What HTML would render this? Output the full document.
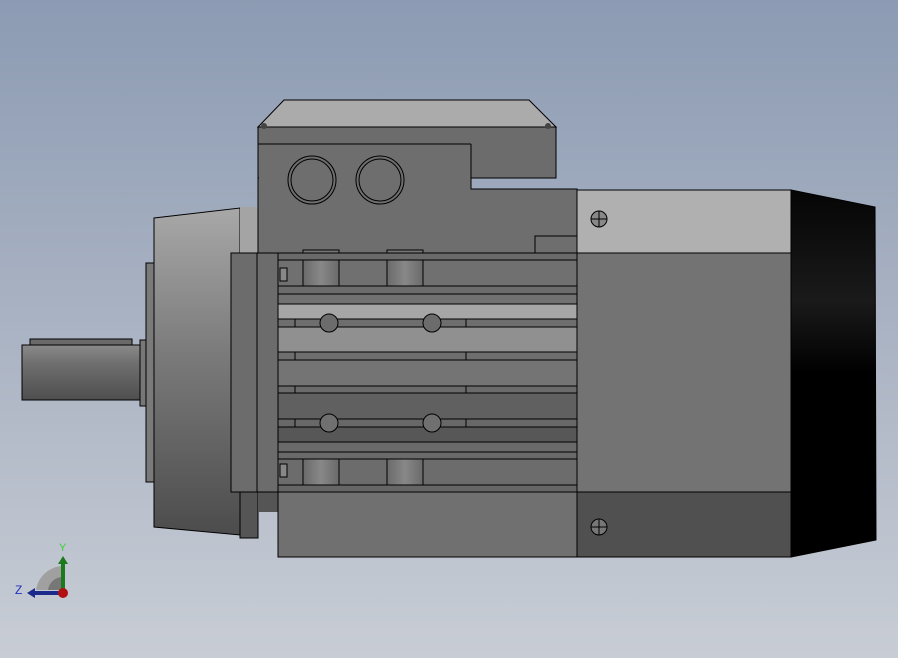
<!DOCTYPE html>
<html><head><meta charset="utf-8"><style>
html,body{margin:0;padding:0;width:898px;height:658px;overflow:hidden}
svg{display:block}
</style></head><body>
<svg width="898" height="658" viewBox="0 0 898 658" xmlns="http://www.w3.org/2000/svg" font-family="Liberation Sans, sans-serif">
<defs>
<linearGradient id="bg" x1="0" y1="0" x2="0" y2="1"><stop offset="0" stop-color="#8c9bb3"/><stop offset="0.5" stop-color="#aab3c3"/><stop offset="1" stop-color="#c8cdd5"/></linearGradient>
<linearGradient id="fl" x1="0" y1="0" x2="0" y2="1"><stop offset="0" stop-color="#a8a8a8"/><stop offset="0.45" stop-color="#7a7a7a"/><stop offset="1" stop-color="#4c4c4c"/></linearGradient>
<linearGradient id="sh" x1="0" y1="0" x2="0" y2="1"><stop offset="0" stop-color="#8a8a8a"/><stop offset="0.35" stop-color="#6e6e6e"/><stop offset="1" stop-color="#4e4e4e"/></linearGradient>
<linearGradient id="fan" x1="0" y1="0" x2="0" y2="1"><stop offset="0" stop-color="#050505"/><stop offset="0.3" stop-color="#1a1a1a"/><stop offset="0.5" stop-color="#000"/><stop offset="1" stop-color="#000"/></linearGradient>
<linearGradient id="blk" x1="0" y1="0" x2="1" y2="0"><stop offset="0" stop-color="#6a6a6a"/><stop offset="0.5" stop-color="#888"/><stop offset="1" stop-color="#6a6a6a"/></linearGradient>
</defs>
<rect width="898" height="658" fill="url(#bg)"/>

<!-- shaft -->
<rect x="30" y="339" width="102" height="7" fill="#6a6a6a" stroke="#000" stroke-width="1"/>
<rect x="22" y="345" width="118" height="55" fill="url(#sh)" stroke="#000" stroke-width="1"/>
<rect x="140" y="340" width="6" height="66" fill="#777" stroke="#000" stroke-width="1"/>
<rect x="146" y="263" width="8" height="219" fill="#7a7a7a" stroke="#000" stroke-width="1"/>
<!-- flange -->
<polygon points="154,218 240,208 240,535 154,527" fill="url(#fl)" stroke="#000" stroke-width="1"/>
<rect x="240" y="207" width="18" height="47" fill="#a4a4a4"/>
<rect x="240" y="492" width="18" height="46" fill="#555" stroke="#000" stroke-width="1"/>
<rect x="258" y="492" width="20" height="20" fill="#555"/>

<!-- housing -->
<path d="M258,144 L471,144 L471,189 L577,189 L577,254 L258,254 Z" fill="#6e6e6e" stroke="#000" stroke-width="1"/>
<!-- terminal box -->
<polygon points="284,100 529,100 556,127 258,127" fill="#ababab" stroke="#000" stroke-width="1"/>
<rect x="258" y="127" width="298" height="51" fill="#6c6c6c" stroke="#000" stroke-width="1"/>
<rect x="259" y="145" width="212" height="44" fill="#6e6e6e"/>
<line x1="258" y1="144" x2="471" y2="144" stroke="#000"/>
<line x1="471" y1="144" x2="471" y2="189" stroke="#000"/>
<circle cx="312" cy="180" r="24" fill="none" stroke="#000"/><circle cx="312" cy="180" r="21" fill="none" stroke="#000"/>
<circle cx="380" cy="180" r="24" fill="none" stroke="#000"/><circle cx="380" cy="180" r="21" fill="none" stroke="#000"/>
<circle cx="264" cy="126" r="3" fill="#444"/><circle cx="548" cy="126" r="3" fill="#444"/>
<polyline points="535,253 535,236 577,236" fill="none" stroke="#000"/>
<polyline points="535,492 535,509 577,509" fill="none" stroke="#000"/>

<!-- left plate -->
<rect x="231" y="253" width="47" height="239" fill="#6c6c6c" stroke="#000" stroke-width="1"/>
<line x1="257" y1="253" x2="257" y2="492" stroke="#000"/>

<!-- fins -->
<g stroke="#000" stroke-width="1">
<rect x="278" y="253" width="299" height="7" fill="#6a6a6a"/>
<rect x="278" y="260" width="299" height="26" fill="#707070"/>
<rect x="278" y="286" width="299" height="8" fill="#6c6c6c"/>
<rect x="278" y="294" width="299" height="10" fill="#717171"/>
<rect x="278" y="304" width="299" height="15" fill="#a6a6a6"/>
<rect x="278" y="319" width="299" height="8" fill="#6e6e6e"/>
<rect x="278" y="327" width="299" height="25" fill="#909090"/>
<rect x="278" y="352" width="299" height="8" fill="#6e6e6e"/>
<rect x="278" y="360" width="299" height="26" fill="#747474"/>
<rect x="278" y="386" width="299" height="7" fill="#6a6a6a"/>
<rect x="278" y="393" width="299" height="26" fill="#606060"/>
<rect x="278" y="419" width="299" height="8" fill="#686868"/>
<rect x="278" y="427" width="299" height="15" fill="#575757"/>
<rect x="278" y="442" width="299" height="10" fill="#6a6a6a"/>
<rect x="278" y="452" width="299" height="7" fill="#6a6a6a"/>
<rect x="278" y="459" width="299" height="26" fill="#6c6c6c"/>
<rect x="278" y="485" width="299" height="7" fill="#666"/>
<rect x="303" y="260" width="36" height="26" fill="url(#blk)"/>
<rect x="387" y="260" width="36" height="26" fill="url(#blk)"/>
<rect x="303" y="459" width="36" height="26" fill="url(#blk)"/>
<rect x="387" y="459" width="36" height="26" fill="url(#blk)"/>
<rect x="303" y="250" width="36" height="3" fill="#777"/>
<rect x="387" y="250" width="36" height="3" fill="#777"/>
<line x1="295" y1="319" x2="295" y2="327"/><line x1="466" y1="319" x2="466" y2="327"/>
<line x1="295" y1="352" x2="295" y2="360"/><line x1="466" y1="352" x2="466" y2="360"/>
<line x1="295" y1="386" x2="295" y2="393"/><line x1="466" y1="386" x2="466" y2="393"/>
<line x1="295" y1="419" x2="295" y2="427"/><line x1="466" y1="419" x2="466" y2="427"/>
<circle cx="329" cy="323" r="9" fill="#6c6c6c"/><circle cx="432" cy="323" r="9" fill="#6c6c6c"/>
<circle cx="329" cy="423" r="9" fill="#707070"/><circle cx="432" cy="423" r="9" fill="#707070"/>
<rect x="280" y="268" width="7" height="13" fill="#888"/>
<rect x="280" y="464" width="7" height="13" fill="#888"/>
<rect x="278" y="492" width="299" height="65" fill="#707070"/>
</g>

<!-- right section -->
<g stroke="#000" stroke-width="1">
<rect x="577" y="190" width="214" height="63" fill="#b0b0b0"/>
<rect x="577" y="253" width="214" height="239" fill="#737373"/>
<rect x="577" y="492" width="214" height="65" fill="#505050"/>
<circle cx="599" cy="219" r="8" fill="#888"/>
<line x1="599" y1="211" x2="599" y2="227"/><line x1="591" y1="219" x2="607" y2="219"/>
<circle cx="599" cy="527" r="8" fill="#777"/>
<line x1="599" y1="519" x2="599" y2="535"/><line x1="591" y1="527" x2="607" y2="527"/>
</g>
<polygon points="791,190 875,207 876,540 791,557" fill="url(#fan)" stroke="#000"/>

<!-- triad -->
<path d="M36,590 A28,28 0 0 1 63,566 L63,590 Z" fill="#a0a0a0"/>
<path d="M48,590 A15,15 0 0 1 63,577 L63,590 Z" fill="#777"/>
<rect x="61" y="563" width="4" height="27" fill="#1c7a1c"/>
<polygon points="58,564 63,556 68,564" fill="#1c7a1c"/>
<rect x="34" y="591" width="28" height="4" fill="#1c2a8c"/>
<polygon points="35,588 27,593 35,598" fill="#1c2a8c"/>
<circle cx="63" cy="593" r="5" fill="#b01010"/>
<text x="59" y="551" font-size="11" fill="#3ad03a">Y</text>
<text x="15" y="594" font-size="12" fill="#2030c0">Z</text>
</svg>
</body></html>
